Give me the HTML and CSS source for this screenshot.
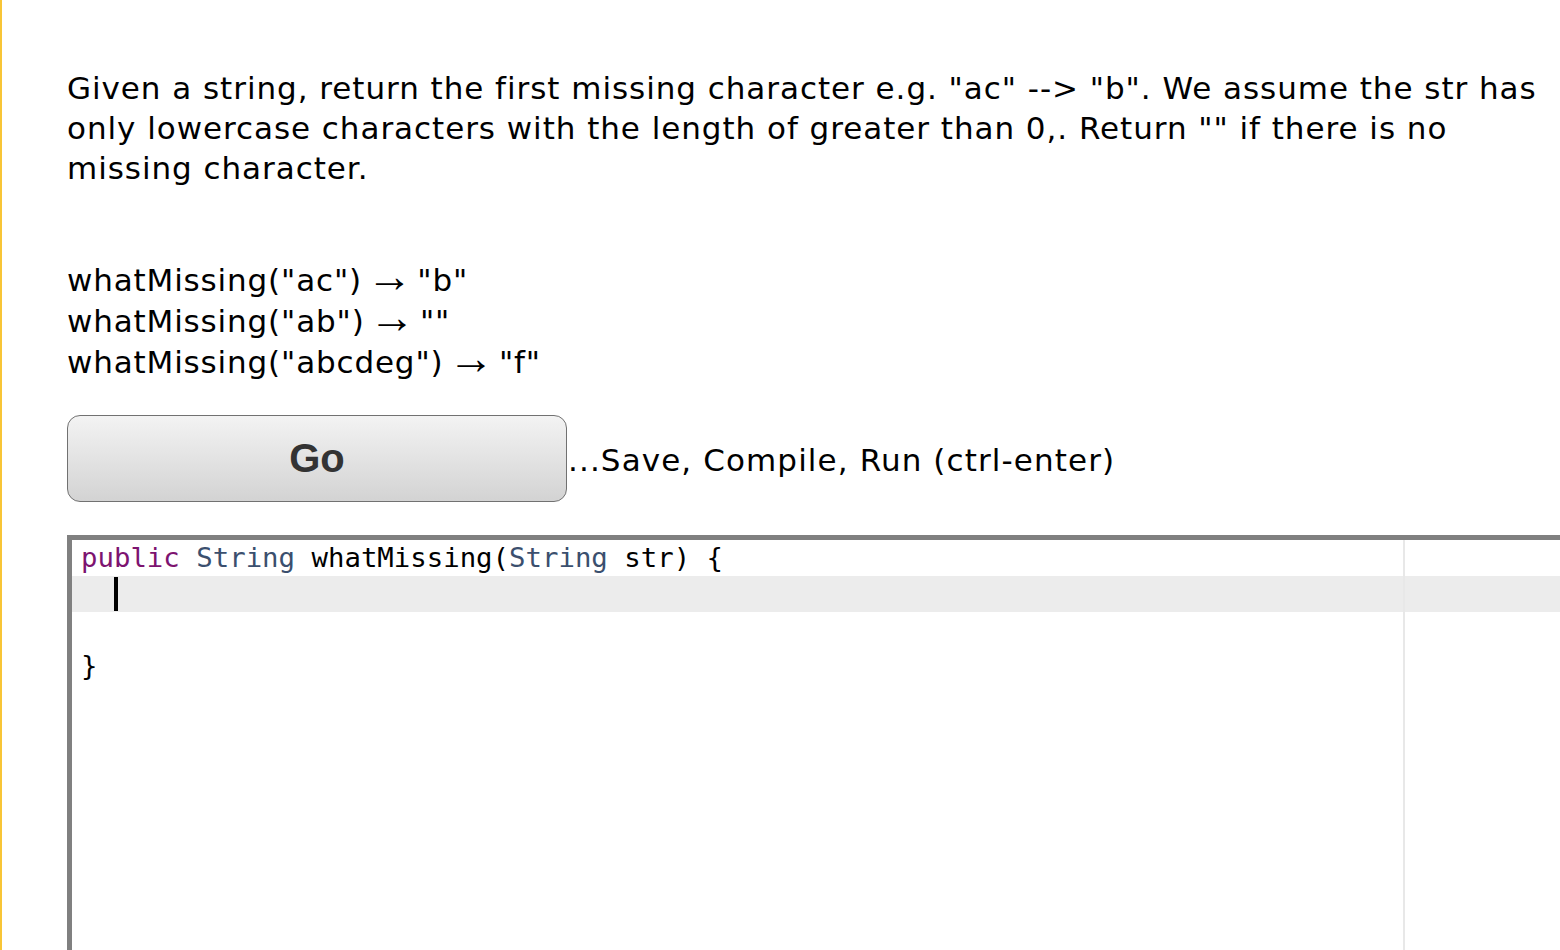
FILE: index.html
```html
<!DOCTYPE html>
<html>
<head>
<meta charset="utf-8">
<link rel="stylesheet" href="styles.css">
</head>
<body>
<div class="page">
  <div class="content">
    <p class="desc">Given a string, return the first missing character e.g. "ac" --&gt; "b". We assume the str has only lowercase characters with the length of greater than 0,. Return "" if there is no missing character.</p>
    <div class="examples">
      <div class="ex">whatMissing("ac") <span class="arrow">→</span> "b"</div>
      <div class="ex">whatMissing("ab") <span class="arrow">→</span> ""</div>
      <div class="ex">whatMissing("abcdeg") <span class="arrow">→</span> "f"</div>
    </div>
    <div class="go-row">
      <button class="go">Go</button>
      <span class="go-note">...Save, Compile, Run (ctrl-enter)</span>
    </div>
    <div class="editor">
      <div class="print-margin"></div>
      <div class="line"><span class="kw">public</span> <span class="ty">String</span> whatMissing(<span class="ty">String</span> str) {</div>
      <div class="line active"><span class="indent">  </span><span class="cursor"></span></div>
      <div class="line"> </div>
      <div class="line">}</div>
    </div>
  </div>
</div>
</body>
</html>
```
FILE: styles.css
```css
html, body {
  margin: 0;
  padding: 0;
  background: #ffffff;
  overflow: hidden;
}
.page {
  height: 950px;
  border-left: 2px solid #f8c536;
  box-sizing: border-box;
  padding-left: 65px;
  padding-top: 68px;
  font-family: "DejaVu Sans", Verdana, sans-serif;
  color: #000;
}
.desc {
  margin: 0;
  font-size: 31px;
  line-height: 40px;
  letter-spacing: 0.95px;
  width: 1488px;
}
.examples {
  margin-top: 72px;
  font-size: 31px;
  line-height: 41px;
  letter-spacing: 0.85px;
}
.ex {
  height: 41px;
  word-spacing: -6px;
}
.arrow {
  font-family: "Liberation Serif", "Times New Roman", serif;
  font-size: 46px;
  line-height: 0;
  letter-spacing: 0;
  word-spacing: 0;
  vertical-align: -1px;
}
.go-row {
  display: flex;
  align-items: center;
  margin-top: 32px;
}
.go {
  width: 500px;
  height: 87px;
  border: 1.5px solid #717171;
  border-radius: 13px;
  background: linear-gradient(#f3f3f3, #d3d3d3);
  font-family: "Liberation Sans", Arial, sans-serif;
  font-weight: bold;
  font-size: 40px;
  color: #333;
  padding: 0;
}
.go-note {
  font-size: 31px;
  letter-spacing: 1.1px;
  margin-left: 1px;
  margin-top: 2px;
}
.editor {
  position: relative;
  margin-top: 33px;
  height: 420px;
  width: 1490px;
  border-top: 5px solid #808080;
  border-left: 5px solid #808080;
  font-family: "DejaVu Sans Mono", "Liberation Mono", monospace;
  font-size: 27.35px;
}
.print-margin {
  position: absolute;
  left: 1331px;
  top: 0;
  bottom: 0;
  width: 2px;
  background: #e8e8e8;
}
.line {
  height: 36px;
  line-height: 36px;
  padding-left: 9px;
  white-space: pre;
  color: #000;
}
.line.active {
  background: #ececec;
  display: flex;
  align-items: center;
}
.kw { color: #7d1370; }
.ty { color: #3b4f6e; }
.cursor {
  display: inline-block;
  width: 4px;
  height: 34px;
  background: #000;
}
```
